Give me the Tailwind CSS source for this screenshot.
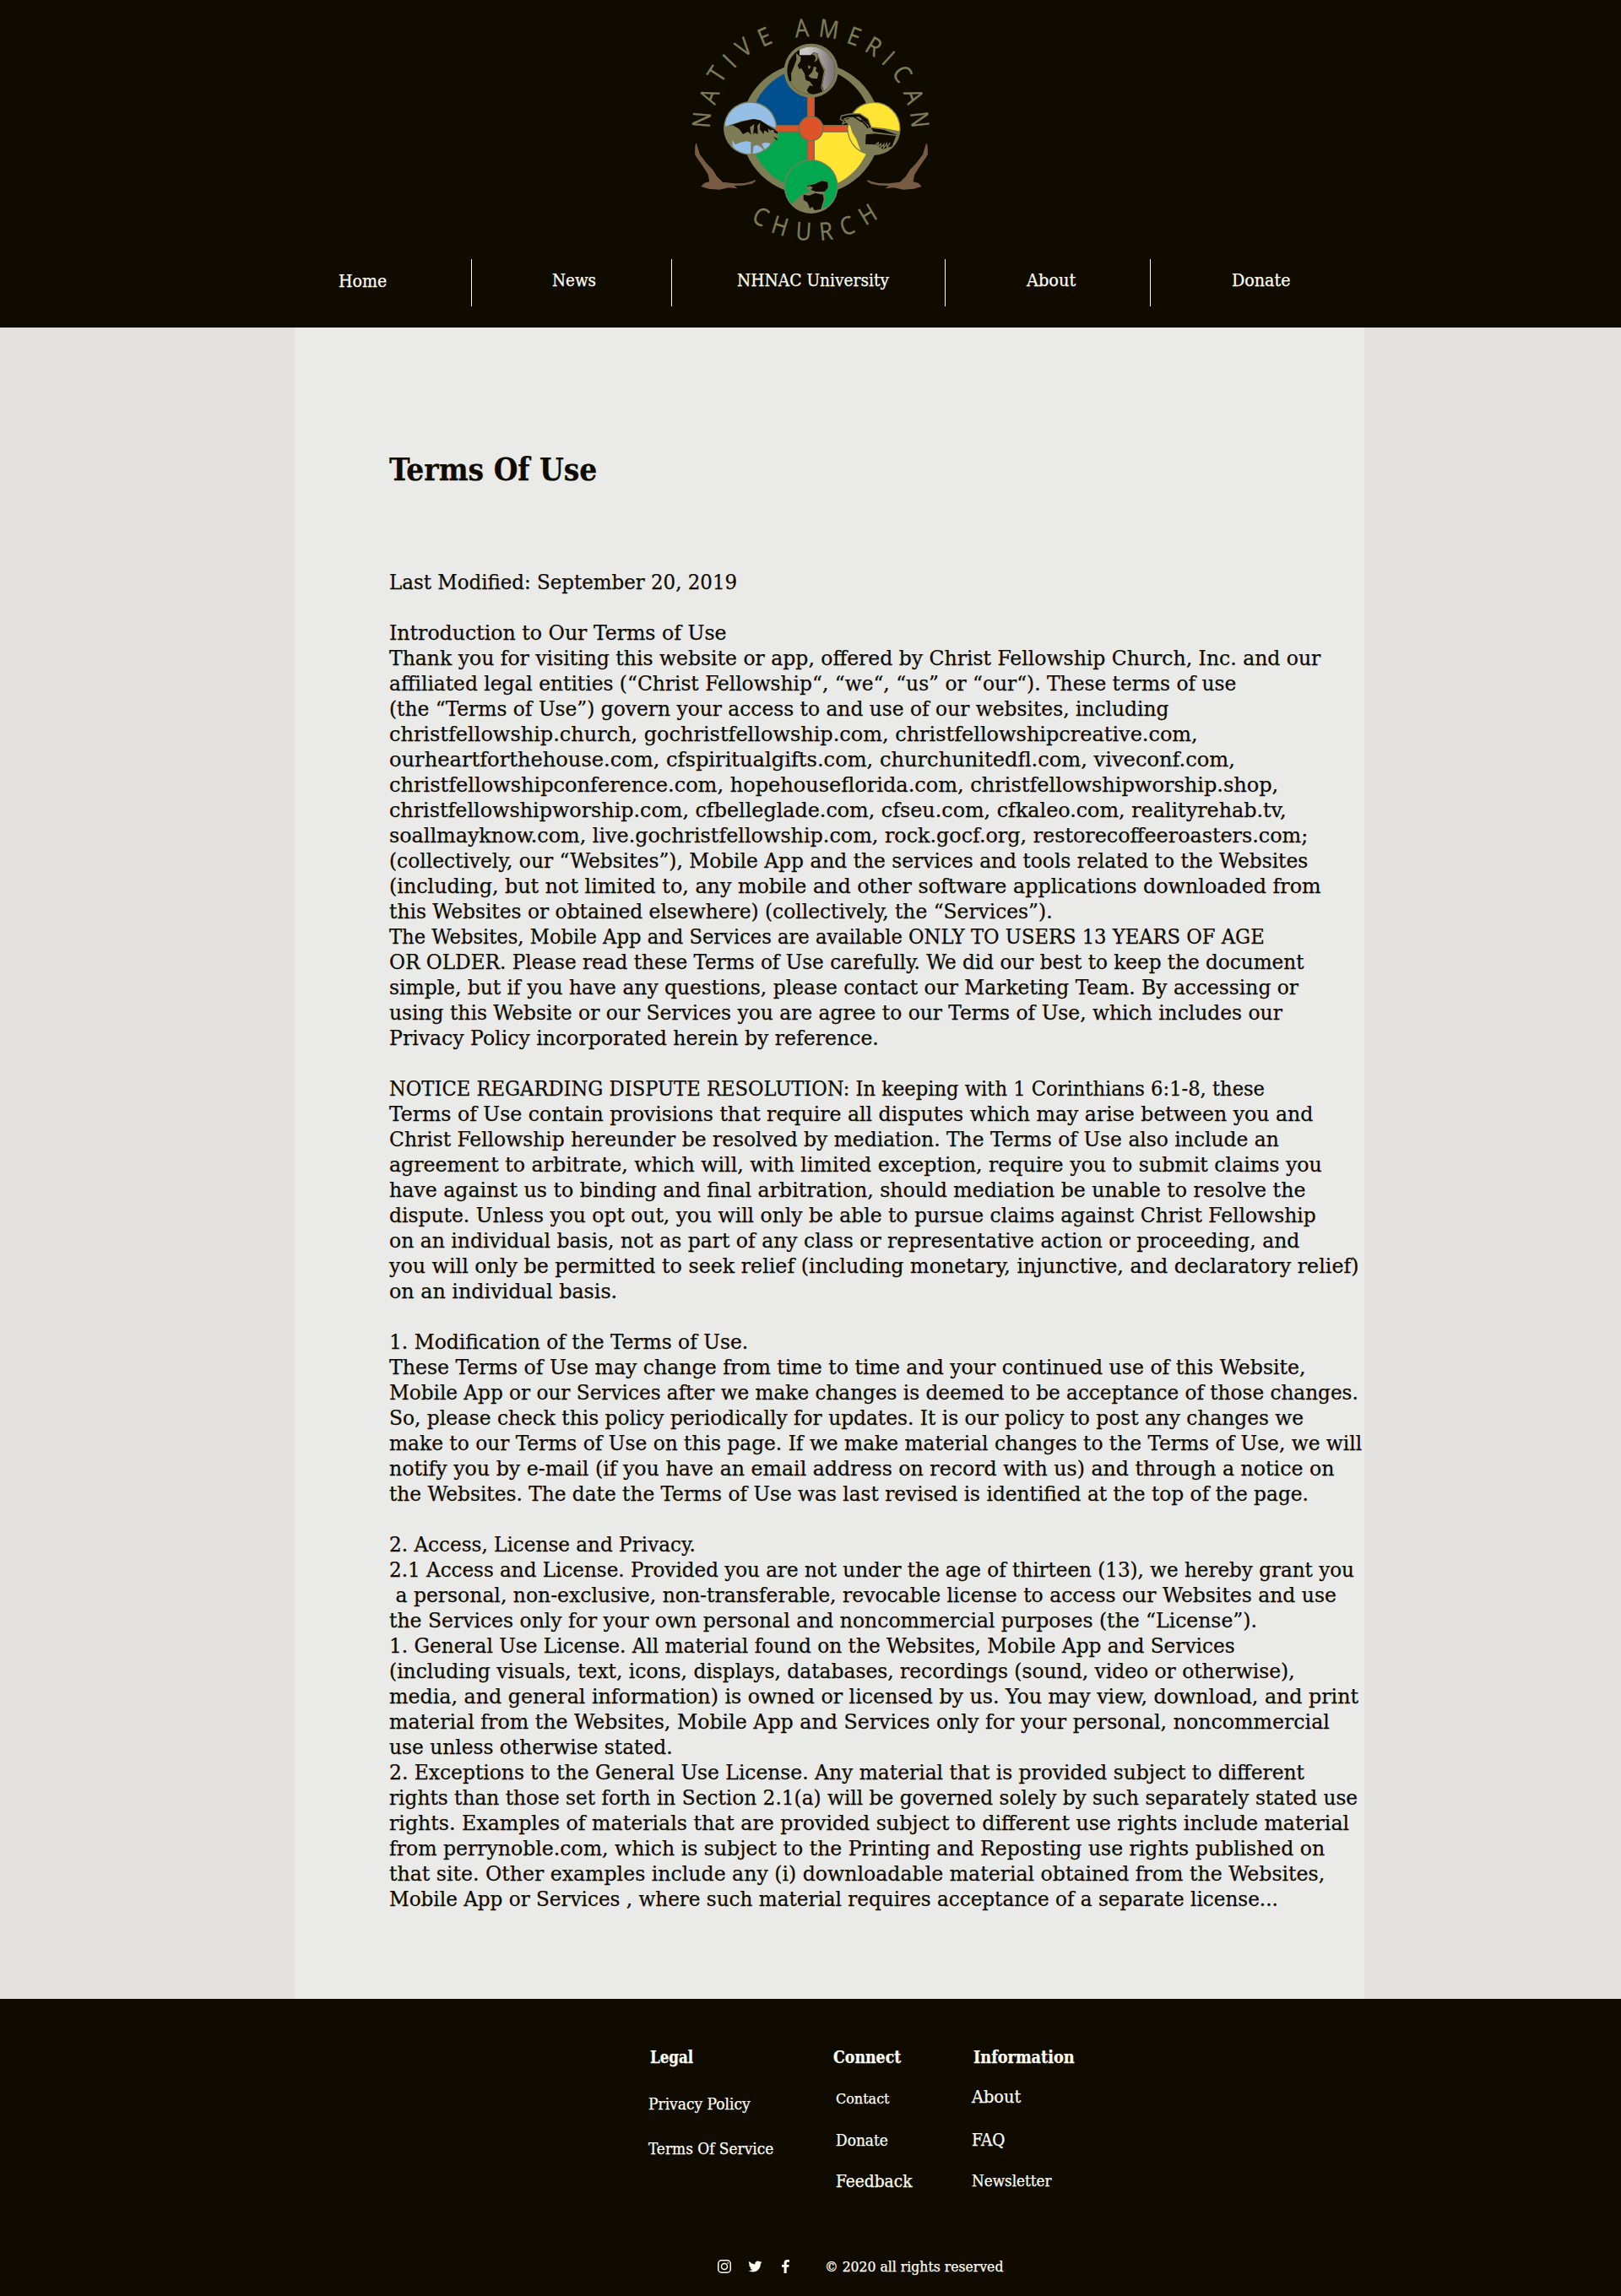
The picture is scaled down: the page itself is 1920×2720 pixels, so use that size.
<!DOCTYPE html>
<html lang="en">
<head>
<meta charset="utf-8">
<title>Terms Of Use</title>
<script src="https://cdn.jsdelivr.net/npm/@tailwindcss/browser@4"></script>
</head>
<body class="bg-[#e2e1df] text-[#0f0b00] font-['DejaVu_Serif_Condensed','DejaVu_Serif',serif] [-webkit-text-stroke:0.25px_currentColor]">
<header class="h-[388px] bg-[#0f0b00] text-[#fffdf0]">
  <svg class="block mx-auto [-webkit-text-stroke:0]" width="320" height="300" viewBox="0 0 960 900" role="img" aria-label="Native American Church">
    <defs>
      <linearGradient id="moon"><stop offset="0.2" stop-color="#c9c6c8"/><stop offset="0.7" stop-color="#8a8384"/><stop offset="1" stop-color="#6b6465"/></linearGradient>
      <clipPath id="disc"><circle cx="481" cy="457" r="216"/></clipPath>
      <clipPath id="cTop"><circle cx="482" cy="251" r="85"/></clipPath>
      <clipPath id="cLeft"><circle cx="266" cy="456" r="91"/></clipPath>
      <clipPath id="cRight"><circle cx="705" cy="457" r="91"/></clipPath>
      <clipPath id="cBot"><circle cx="482" cy="663" r="92"/></clipPath>
    </defs>
    <ellipse cx="481" cy="457" rx="247" ry="236" fill="#7d7c55"/>
    <g clip-path="url(#disc)">
      <rect x="240" y="220" width="241" height="237" fill="#00508f"/>
      <rect x="481" y="220" width="240" height="237" fill="#0f0b00"/>
      <rect x="240" y="457" width="241" height="240" fill="#03a84e"/>
      <rect x="481" y="457" width="240" height="240" fill="#ffe433"/>
    </g>
    <g fill="#dc5427" stroke="#7d6a48" stroke-width="4">
      <path d="M470 330H493V580H470Z"/><path d="M350 446H620V468H350Z"/>
      <circle cx="482" cy="457" r="43"/>
    </g>
    <path d="M472 440h19v40h-19zM460 448h44v18h-44z" fill="#dc5427"/>
    <!-- wolf -->
    <circle cx="482" cy="251" r="96" fill="#7d7c55"/>
    <g clip-path="url(#cTop)">
      <rect x="386" y="155" width="192" height="192" fill="#0f0b00"/>
      <path d="M441 150H590V300L531 336L522 306L532 250L515 218L505 190L492 186L480 196H441Z" fill="url(#moon)"/>
      <path d="M429 189L446 203L444 218L434 232L440 246L447 242L459 262L463 284L478 290L490 306L477 304L467 320L473 330L510 346L440 350L395 300L412 287L411 262L422 234L430 212Z" fill="#7d7c55"/>
      <path d="M470 232l12 5-8 10zM492 236l10 4-4 12 10 8-4 20-20-2-12-8 14-14zM484 193l14-8 9 10-2 18-12 8 6-14-4-10z" fill="#7d7c55"/>
      <path d="M507 198L516 222L530 252L523 288L519 312L530 335" fill="none" stroke="#7d7c55" stroke-width="4"/>
    </g>
    <!-- buffalo -->
    <circle cx="266" cy="456" r="95" fill="#7d7c55"/>
    <g clip-path="url(#cLeft)">
      <path d="M170 360H366V458L330 444L300 426L272 423L235 430L178 450Z" fill="#95bfe6"/>
      <path d="M203 497L212 514L231 506L252 502L268 505V550H225L203 518ZM278 519L290 515L304 523L313 533L295 550H274ZM306 511L320 506L335 509L342 517L318 533Z" fill="#95bfe6"/>
    </g>
    <path d="M187 448L240 431L279 423L302 428L327 445L354 461L364 471L350 468L338 464L329 457L331 472L316 463L313 477L300 460L301 436L291 447L293 477L281 472L276 480L280 441L265 452L269 479L258 468L240 477L227 459L204 445Z" fill="#0f0b00"/>
    <path d="M339 461L361 464L368 482L347 504L338 503Z" fill="#7d7c55"/><path d="M350 461l12 6 2 9-14-6zM347 485l14 7v8z" fill="#0f0b00"/>
    <!-- eagle -->
    <circle cx="705" cy="457" r="95" fill="#7d7c55"/>
    <g clip-path="url(#cRight)">
      <path d="M610 355H810V470L787 464L744 456L697 451L685 430L665 412L640 402L620 405Z" fill="#ffe433"/>
      <path d="M610 447L620 445L628 470L643 495L652 520L662 543L630 520L612 485Z" fill="#ffe433"/>
      <path d="M695 455L740 461L790 480L745 474L704 468ZM677 478L710 475L784 483L770 520L738 530L712 514L675 512Z" fill="#0f0b00"/>
    </g>
    <path d="M586 424L590 411L620 405L655 404L684 423L693 445L676 433L652 417L612 419L600 423L608 434L594 440L598 430Z" fill="#0f0b00" stroke="#7d7c55" stroke-width="4"/>
    <path d="M600 425L646 420L668 440L640 450L612 441Z" fill="#7d7c55"/>
    <path d="M655 413l28 28M660 426l25 29M632 413l30 20M684 435l8 19" fill="none" stroke="#0f0b00" stroke-width="5"/>
    <path d="M711 514l10-7-2 14 11-10-1 13 12-12-2 16 12-18 1 15 11-18" fill="none" stroke="#7d7c55" stroke-width="4"/>
    <!-- bear -->
    <circle cx="482" cy="663" r="96" fill="#7d7c55"/>
    <g clip-path="url(#cBot)">
      <path d="M380 560H590V690L565 722L520 742L532 708L529 685L544 665L540 644L520 642L494 654L466 658L468 671L480 681L453 688L440 698L414 724L380 700Z" fill="#03a84e"/>
      <path d="M468 660L494 655L520 643L541 647L542 667L530 681L498 681L481 674L489 666L472 666ZM455 692L475 695L497 686L525 692L527 710L517 743L495 748L486 734L478 742L469 719L455 710Z" fill="#0f0b00"/>
      <path d="M475 660L487 665L478 675L469 668Z" fill="#7d7c55"/>
    </g>
    <g fill="#775b42">
      <path d="M74 507L87 549L110 580L133 604L148 628L168 647L210 652L244 651L267 646L284 639L284 645L271 653L239 659L208 660L221 670L190 667L156 674L119 671L91 663L103 650L121 646L116 620L97 590L76 560L69 548L70 519Z"/>
      <path d="M892 507L879 549L856 580L833 604L818 628L798 647L756 652L722 651L699 646L682 639L682 645L695 653L727 659L758 660L745 670L776 667L810 674L847 671L875 663L863 650L845 646L850 620L869 590L890 560L897 548L896 519Z"/>
    </g>
    <g fill="#7d7c55" stroke="#7d7c55" stroke-width="1" font-family="'Open Sans',sans-serif" font-size="88" text-anchor="middle">
      <text transform="translate(93 426) rotate(-85) scale(.86 1)" y="31">N</text>
      <text transform="translate(120 341) rotate(-69) scale(.88 1)" y="31">A</text>
      <text transform="translate(147 264) rotate(-57) scale(.88 1)" y="31">T</text>
      <text transform="translate(192 217) rotate(-46) scale(.88 1)" y="31">I</text>
      <text transform="translate(243 168) rotate(-36) scale(.88 1)" y="31">V</text>
      <text transform="translate(317 131) rotate(-23) scale(.88 1)" y="31">E</text>
      <text transform="translate(449 100) rotate(-4) scale(.88 1)" y="31">A</text>
      <text transform="translate(546 103) rotate(8) scale(.88 1)" y="31">M</text>
      <text transform="translate(635 129) rotate(20) scale(.88 1)" y="31">E</text>
      <text transform="translate(705 165) rotate(31) scale(.88 1)" y="31">R</text>
      <text transform="translate(757 207) rotate(42) scale(.88 1)" y="31">I</text>
      <text transform="translate(806 262) rotate(54) scale(.88 1)" y="31">C</text>
      <text transform="translate(847 342) rotate(70) scale(.88 1)" y="31">A</text>
      <text transform="translate(868 425) rotate(84) scale(.86 1)" y="31">N</text>
      <text transform="translate(303 769) rotate(28) scale(.88 1)" y="31">C</text>
      <text transform="translate(372 803) rotate(17) scale(.86 1)" y="31">H</text>
      <text transform="translate(456 822) rotate(4) scale(.86 1)" y="31">U</text>
      <text transform="translate(535 822) rotate(-6) scale(.88 1)" y="31">R</text>
      <text transform="translate(610 803) rotate(-19) scale(.88 1)" y="31">C</text>
      <text transform="translate(683 762) rotate(-31) scale(.86 1)" y="31">H</text>
    </g>
  </svg>
  <nav class="flex h-14 mt-[7px] ml-[299px] w-[1322px] text-[20px] leading-[28px] whitespace-nowrap">
    <a class="w-[260px] border-r border-[#fffdf0] pl-[102px] pt-3"><span class="inline-block origin-left" data-w="57">Home</span></a>
    <a class="w-[237px] border-r border-[#fffdf0] pl-[95px] pt-[11px]"><span class="inline-block origin-left" data-w="52">News</span></a>
    <a class="w-[324px] border-r border-[#fffdf0] pl-[77px] pt-[11px]"><span class="inline-block origin-left" data-w="180">NHNAC University</span></a>
    <a class="w-[243px] border-r border-[#fffdf0] pl-[96px] pt-[11px]"><span class="inline-block origin-left" data-w="58">About</span></a>
    <a class="pl-[96px] pt-[11px]"><span class="inline-block origin-left" data-w="69">Donate</span></a>
  </nav>
</header>
<main class="ml-[349px] w-[1267px] h-[1980px] bg-[#eaeae8] pl-28 pt-[148px]">
<h1 class="text-[38px] leading-[40px] font-bold h-[139px] whitespace-nowrap"><span class="inline-block origin-left" data-w="246">Terms Of Use</span></h1>
<div id="terms" class="text-[25px] leading-[30px] whitespace-pre"></div>
</main>
<footer class="h-[352px] bg-[#0f0b00] text-[#fffdf0] whitespace-nowrap">
  <div class="flex pl-[768px] pt-[57px] h-[300px]">
    <div class="w-[219px]">
      <h2 class="pl-0.5 text-[20px] leading-[24px] font-bold"><span class="inline-block origin-left" data-w="51">Legal</span></h2>
      <p class="mt-8 text-[18.5px] leading-[24px]"><span class="inline-block origin-left" data-w="121">Privacy Policy</span></p>
      <p class="mt-[29px] text-[18.5px] leading-[24px]"><span class="inline-block origin-left" data-w="148">Terms Of Service</span></p>
    </div>
    <div class="w-[164px]">
      <h2 class="text-[20px] leading-[24px] font-bold"><span class="inline-block origin-left" data-w="80">Connect</span></h2>
      <p class="pl-[3px] mt-[25px] text-[17.5px] leading-[24px]"><span class="inline-block origin-left" data-w="64">Contact</span></p>
      <p class="pl-[3px] mt-[26px] text-[18px] leading-[24px]"><span class="inline-block origin-left" data-w="62">Donate</span></p>
      <p class="pl-[3px] mt-[24px] text-[20px] leading-[24px]"><span class="inline-block origin-left" data-w="90">Feedback</span></p>
    </div>
    <div>
      <h2 class="pl-0.5 text-[20px] leading-[24px] font-bold"><span class="inline-block origin-left" data-w="120">Information</span></h2>
      <p class="mt-[23px] text-[20px] leading-[24px]"><span class="inline-block origin-left" data-w="58">About</span></p>
      <p class="mt-[27px] text-[20px] leading-[24px]"><span class="inline-block origin-left" data-w="40">FAQ</span></p>
      <p class="mt-[25px] text-[18.5px] leading-[24px]"><span class="inline-block origin-left" data-w="95">Newsletter</span></p>
    </div>
  </div>
  <div class="flex items-center pl-[850px] h-8 pt-1 -mt-[1px]">
    <svg width="16" height="16" viewBox="0 0 16 16" fill="none" stroke="#fffdf0" stroke-width="1.5"><rect x=".75" y=".75" width="14.5" height="14.5" rx="4"/><circle cx="8" cy="8" r="3.5"/><circle cx="12.2" cy="3.9" r=".5" stroke-width="1"/></svg>
    <svg class="ml-5" width="17" height="16" viewBox="0 0 24 24" fill="#fffdf0"><path d="M23.95 4.57a10 10 0 0 1-2.82.77 4.96 4.96 0 0 0 2.16-2.72c-.95.55-2 .95-3.13 1.18a4.92 4.92 0 0 0-8.38 4.48C7.69 8.1 4.07 6.13 1.64 3.16a4.92 4.92 0 0 0 1.52 6.57 4.9 4.9 0 0 1-2.23-.61v.06a4.92 4.92 0 0 0 3.95 4.83 5 5 0 0 1-2.21.08 4.94 4.94 0 0 0 4.6 3.42A9.87 9.87 0 0 1 0 19.54a14 14 0 0 0 7.55 2.21c9.05 0 14-7.5 14-13.99 0-.21 0-.42-.02-.63a9.94 9.94 0 0 0 2.46-2.55z"/></svg>
    <svg class="ml-[23px]" width="9" height="16" viewBox="0 0 9 16" fill="#fffdf0"><path d="M2.6 16V8.8H0V6h2.6V4C2.6 1.4 4.1 0 6.5 0 7.6 0 8.7.1 9 .2v2.6H7.3C6 2.8 5.7 3.4 5.7 4.3V6h3l-.4 2.800H5.700V16z"/></svg>
    <p class="ml-[42px] text-[17px] leading-[24px]"><span class="inline-block origin-left" data-w="211">© 2020 all rights reserved</span></p>
  </div>
</footer>
<script>
// Each line of the terms with its set width in pixels.
const lines = [
[412,"Last Modified: September 20, 2019"],
[0,""],
[399.5,"Introduction to Our Terms of Use"],
[1103,"Thank you for visiting this website or app, offered by Christ Fellowship Church, Inc. and our"],
[1003,"affiliated legal entities (“Christ Fellowship“, “we“, “us” or “our“). These terms of use"],
[923,"(the “Terms of Use”) govern your access to and use of our websites, including"],
[958,"christfellowship.church, gochristfellowship.com, christfellowshipcreative.com,"],
[1002,"ourheartforthehouse.com, cfspiritualgifts.com, churchunitedfl.com, viveconf.com,"],
[1053,"christfellowshipconference.com, hopehouseflorida.com, christfellowshipworship.shop,"],
[1062,"christfellowshipworship.com, cfbelleglade.com, cfseu.com, cfkaleo.com, realityrehab.tv,"],
[1088,"soallmayknow.com, live.gochristfellowship.com, rock.gocf.org, restorecoffeeroasters.com;"],
[1088.5,"(collectively, our “Websites”), Mobile App and the services and tools related to the Websites"],
[1104,"(including, but not limited to, any mobile and other software applications downloaded from"],
[786,"this Websites or obtained elsewhere) (collectively, the “Services”)."],
[1037,"The Websites, Mobile App and Services are available ONLY TO USERS 13 YEARS OF AGE"],
[1083.5,"OR OLDER. Please read these Terms of Use carefully. We did our best to keep the document"],
[1077,"simple, but if you have any questions, please contact our Marketing Team. By accessing or"],
[1058,"using this Website or our Services you are agree to our Terms of Use, which includes our"],
[580,"Privacy Policy incorporated herein by reference."],
[0,""],
[1037.5,"NOTICE REGARDING DISPUTE RESOLUTION: In keeping with 1 Corinthians 6:1-8, these"],
[1094.5,"Terms of Use contain provisions that require all disputes which may arise between you and"],
[1054,"Christ Fellowship hereunder be resolved by mediation. The Terms of Use also include an"],
[1105,"agreement to arbitrate, which will, with limited exception, require you to submit claims you"],
[1085,"have against us to binding and final arbitration, should mediation be unable to resolve the"],
[1098,"dispute. Unless you opt out, you will only be able to pursue claims against Christ Fellowship"],
[1078,"on an individual basis, not as part of any class or representative action or proceeding, and"],
[1149,"you will only be permitted to seek relief (including monetary, injunctive, and declaratory relief)"],
[270,"on an individual basis."],
[0,""],
[425,"1. Modification of the Terms of Use."],
[1086,"These Terms of Use may change from time to time and your continued use of this Website,"],
[1147.5,"Mobile App or our Services after we make changes is deemed to be acceptance of those changes."],
[1083.5,"So, please check this policy periodically for updates. It is our policy to post any changes we"],
[1152,"make to our Terms of Use on this page. If we make material changes to the Terms of Use, we will"],
[1119,"notify you by e-mail (if you have an email address on record with us) and through a notice on"],
[1088.5,"the Websites. The date the Terms of Use was last revised is identified at the top of the page."],
[0,""],
[363,"2. Access, License and Privacy."],
[1143,"2.1 Access and License. Provided you are not under the age of thirteen (13), we hereby grant you"],
[1121.5," a personal, non-exclusive, non-transferable, revocable license to access our Websites and use"],
[1028,"the Services only for your own personal and noncommercial purposes (the “License”)."],
[1002,"1. General Use License. All material found on the Websites, Mobile App and Services"],
[1073,"(including visuals, text, icons, displays, databases, recordings (sound, video or otherwise),"],
[1148.5,"media, and general information) is owned or licensed by us. You may view, download, and print"],
[1114,"material from the Websites, Mobile App and Services only for your personal, noncommercial"],
[336,"use unless otherwise stated."],
[1083.5,"2. Exceptions to the General Use License. Any material that is provided subject to different"],
[1147,"rights than those set forth in Section 2.1(a) will be governed solely by such separately stated use"],
[1137,"rights. Examples of materials that are provided subject to different use rights include material"],
[1108.5,"from perrynoble.com, which is subject to the Printing and Reposting use rights published on"],
[1108,"that site. Other examples include any (i) downloadable material obtained from the Websites,"],
[1053,"Mobile App or Services , where such material requires acceptance of a separate license..."]
];
const terms = document.getElementById('terms');
for (const [w, t] of lines) {
  const row = document.createElement('p');
  row.className = 'h-[30px]';
  const s = document.createElement('span');
  s.className = 'inline-block origin-left';
  s.textContent = t;
  if (w) s.dataset.w = w;
  row.append(s);
  terms.append(row);
}
// Condense every marked text to its width, again whenever its natural size changes.
const fit = new ResizeObserver(entries => {
  for (const { target: s } of entries) {
    if (s.offsetWidth) s.style.transform = 'scaleX(' + s.dataset.w / s.offsetWidth + ')';
  }
});
document.querySelectorAll('[data-w]').forEach(s => fit.observe(s));
</script>
</body>
</html>
